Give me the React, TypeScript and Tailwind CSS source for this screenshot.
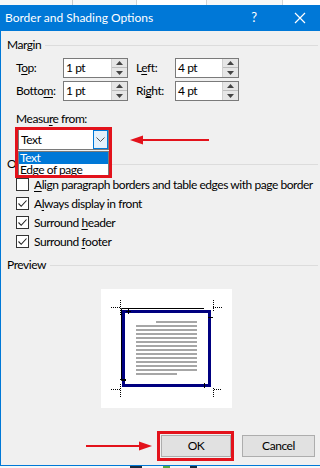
import { ReactNode } from "react";

const font = { fontFamily: 'Lato, "Noto Sans", sans-serif' };

function U({ children }: { children: ReactNode }) {
    return <span className="underline underline-offset-2 decoration-1">{children}</span>;
}

function Spin({ value, w }: { value: string; w: string }) {
    return (
        <div className={`flex h-[20px] ${w} border border-[#7a7a7a] bg-white`}>
            <div className="flex-1 pl-[2px] leading-[18px]">{value}</div>
            <div className="flex w-[16px] flex-col border-l border-[#d0d0d0] bg-[#e6e6e6]">
                <div className="flex h-[9px] items-center justify-center border-b border-[#bdbdbd]">
                    <svg width="7" height="4" viewBox="0 0 7 4">
                        <path d="M0 4 L3.5 0 L7 4 Z" fill="#444" />
                    </svg>
                </div>
                <div className="flex flex-1 items-center justify-center">
                    <svg width="7" height="4" viewBox="0 0 7 4">
                        <path d="M0 0 L3.5 4 L7 0 Z" fill="#444" />
                    </svg>
                </div>
            </div>
        </div>
    );
}

function Check({ on, children }: { on: boolean; children: ReactNode }) {
    return (
        <div className="flex h-[19px] items-center gap-[5px] whitespace-nowrap pl-[15px]">
            <div className="flex h-[13px] w-[13px] shrink-0 items-center justify-center border border-[#333] bg-white">
                {on && (
                    <svg width="11" height="11" viewBox="0 0 11 11">
                        <path d="M1.5 5.5 L4.2 8.3 L9.5 2.5" fill="none" stroke="#222" strokeWidth="1.1" />
                    </svg>
                )}
            </div>
            <span>{children}</span>
        </div>
    );
}

function Group({ title }: { title: string }) {
    return (
        <div className="flex h-[14px] items-center gap-[4px] pl-[6px] pr-[2px]">
            <span className="leading-[14px]">{title}</span>
            <div className="h-px flex-1 bg-[#dcdcdc]" />
        </div>
    );
}

function Preview() {
    const lines = Array.from({ length: 14 }, (_, i) => i);
    return (
        <svg width="131" height="119" viewBox="0 0 131 119">
            <rect x="0" y="0" width="131" height="119" fill="#fff" />
            {lines.map((i) => (
                <rect
                    key={i}
                    x={i === 0 ? 55 : 35}
                    y={32 + i * 4}
                    width={i === 0 ? 41 : i === 13 ? 41 : 61}
                    height="2"
                    fill="#a6a6a6"
                />
            ))}
            <rect x="22.5" y="22.5" width="86" height="74" fill="none" stroke="#000080" strokeWidth="3" />
            <path d="M103 19.5 H20.5 V91.5 H25" fill="none" stroke="#000" strokeWidth="1" />
            <path d="M25 22.5 H30 M27.5 20 V25 M107 28.5 H112 M19 90.5 H25 M103.5 94 V99" stroke="#000" strokeWidth="1" />
            <g stroke="#000" strokeWidth="1" strokeDasharray="1 1">
                <path d="M10 18.5 H19 M19.5 11 V26" />
                <path d="M112 18.5 H121 M112.5 11 V22" />
                <path d="M10 100.5 H19 M19.5 95 V108" />
                <path d="M113 100.5 H121 M112.5 99 V108" />
            </g>
        </svg>
    );
}

export default function App() {
    return (
        <div className="relative flex h-[468px] w-[320px] flex-col overflow-hidden bg-[#f0f0f0] text-[12px] tracking-[-0.45px] text-black" style={font}>
            <div className="flex h-[5px] bg-[#f7f7f7]">
                <div className="w-[73px] border-r border-[#c8c8c8]" />
                <div className="w-[63px]" />
                <div className="w-[71px] border-x border-[#d4d4d4] bg-white" />
                <div className="w-[75px]" />
                <div className="flex-1 border-l border-[#d4d4d4] bg-white" />
            </div>

            <div className="flex h-[26px] items-center bg-[#0078d7] tracking-normal text-white">
                <span className="pl-[5px] text-[12px]">Border and Shading Options</span>
                <span className="ml-auto mr-[37px] text-[13px]">?</span>
                <svg width="12" height="12" viewBox="0 0 12 12" className="mr-[14px]">
                    <path d="M1 1 L11 11 M11 1 L1 11" stroke="#fff" strokeWidth="1.2" />
                </svg>
            </div>

            <div className="relative flex flex-1 flex-col border-l border-[#0078d7]">
                <div className="mt-[7px]">
                    <Group title="Margin" />
                </div>

                <div className="mt-[6px] flex items-center pl-[15px]">
                    <span className="w-[47px]">T<U>o</U>p:</span>
                    <Spin value="1 pt" w="w-[65px]" />
                    <span className="ml-[8px] w-[39px]">L<U>e</U>ft:</span>
                    <Spin value="4 pt" w="w-[64px]" />
                </div>
                <div className="mt-[3px] flex items-center pl-[15px]">
                    <span className="w-[47px]">Botto<U>m</U>:</span>
                    <Spin value="1 pt" w="w-[65px]" />
                    <span className="ml-[8px] w-[39px]">Ri<U>g</U>ht:</span>
                    <Spin value="4 pt" w="w-[64px]" />
                </div>

                <div className="mt-[11px] h-[14px] pl-[15px] leading-[14px]">
                    Measu<U>r</U>e from:
                </div>

                <div className="relative ml-[17px] mt-[3px] w-[91px]">
                    <div className="flex h-[21px] border border-[#7a7a7a] bg-white">
                        <span className="flex-1 pl-[2px] leading-[19px]">Text</span>
                        <div className="flex w-[15px] items-center justify-center border border-[#0078d7] bg-[#e5f1fb]">
                            <svg width="9" height="5" viewBox="0 0 9 5">
                                <path d="M0.5 0.5 L4.5 4.5 L8.5 0.5" fill="none" stroke="#555" strokeWidth="1" />
                            </svg>
                        </div>
                    </div>
                    <div className="absolute left-0 top-[22px] z-10 w-[91px] border border-[#7a7a7a] bg-white">
                        <div className="h-[12px] bg-[#0078d7] pl-[1px] leading-[12px] text-white">Text</div>
                        <div className="h-[12px] pl-[1px] leading-[12px]">Edge of page</div>
                    </div>
                    <div className="absolute -left-[3px] -top-[2px] z-20 h-[51px] w-[97px] border-[3px] border-[#e3121b]" />
                    <svg width="80" height="12" viewBox="0 0 80 12" className="absolute left-[112px] top-[5px]">
                        <path d="M12 6 H79" stroke="#e3121b" strokeWidth="2.2" />
                        <path d="M0 6 L13 1.5 L13 10.5 Z" fill="#e3121b" />
                    </svg>
                </div>

                <div className="mt-[7px]">
                    <Group title="Options" />
                </div>

                <div className="mt-[4px] flex flex-col">
                    <Check on={false}>
                        <U>A</U>lign paragraph borders and table edges with page border
                    </Check>
                    <Check on>
                        A<U>l</U>ways display in front
                    </Check>
                    <Check on>
                        Surround <U>h</U>eader
                    </Check>
                    <Check on>
                        Surround <U>f</U>ooter
                    </Check>
                </div>

                <div className="mt-[7px]">
                    <Group title="Preview" />
                </div>

                <div className="ml-[100px] mt-[17px] h-[119px] w-[131px]">
                    <Preview />
                </div>

                <div className="mt-[27px] flex justify-end gap-[11px] pr-[5px]">
                    <div className="relative">
                        <button className="h-[22px] w-[70px] border border-[#adadad] bg-[#e1e1e1]">OK</button>
                        <div className="absolute -left-[4px] -top-[4px] h-[30px] w-[77px] border-[3px] border-[#e3121b]" />
                        <svg width="66" height="12" viewBox="0 0 66 12" className="absolute -left-[75px] top-[5px]">
                            <path d="M0 6 H54" stroke="#e3121b" strokeWidth="2.2" />
                            <path d="M66 6 L53 1.5 L53 10.5 Z" fill="#e3121b" />
                        </svg>
                    </div>
                    <button className="h-[22px] w-[73px] border border-[#adadad] bg-[#e1e1e1]">Cancel</button>
                </div>
            </div>

            <div className="h-px bg-[#0078d7]" />
            <div className="flex h-[2px] bg-[#f7f7f7]">
                <div className="w-[130px]" />
                <div className="w-[12px] bg-[#1d2a3a]" />
                <div className="w-[21px]" />
                <div className="w-[7px] bg-[#5aa83c]" />
                <div className="w-[20px]" />
                <div className="w-[7px] bg-[#1d2a3a]" />
            </div>
        </div>
    );
}
